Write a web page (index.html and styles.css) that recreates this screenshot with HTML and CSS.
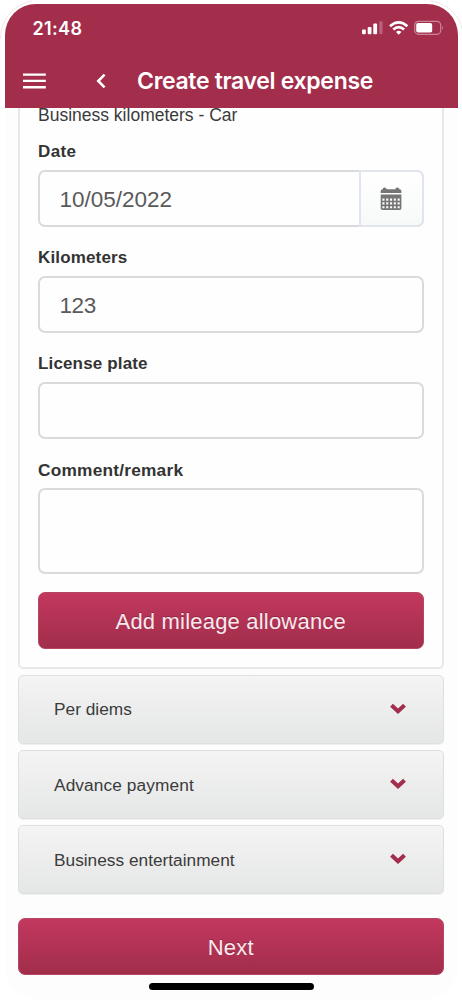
FILE: index.html
```html
<!DOCTYPE html>
<html lang="en">
<head>
<meta charset="utf-8">
<meta name="viewport" content="width=device-width, initial-scale=1">
<title>Create travel expense</title>
<link rel="stylesheet" href="styles.css">
</head>
<body>
<div class="phone">
  <header class="header">
    <div class="status">
      <span class="clock">21:48</span>
      <svg class="status-icons" width="84" height="18" viewBox="0 0 84 18" fill="#fff">
        <rect x="1" y="10.5" width="3.8" height="4.8" rx="1"/>
        <rect x="6.7" y="8" width="3.8" height="7.3" rx="1"/>
        <rect x="12.3" y="4.5" width="3.8" height="10.8" rx="1"/>
        <rect x="18.3" y="2.3" width="3.2" height="13" rx="1" opacity=".25"/>
        <g fill="none" stroke="#fff" stroke-width="2.7">
          <path d="M29 7.2Q37.7 -.6 46.4 7.2"/>
          <path d="M32.3 10.6Q37.7 5.8 43.1 10.6"/>
        </g>
        <path d="M35 13q2.7-2.4 5.4 0l-2.7 2.7z"/>
        <rect x="53.7" y="2.3" width="26" height="13" rx="3.8" fill="none" stroke="#fff" stroke-opacity=".42" stroke-width="1.2"/>
        <rect x="55.2" y="4" width="16" height="9.5" rx="1.8"/>
        <path d="M81 6.8q1.8 1.9 0 4z" opacity=".5"/>
      </svg>
    </div>
    <div class="navbar">
      <svg class="menu" width="23" height="16" viewBox="0 0 23 16" fill="#fff"><path d="M0 .4h22.8v2.4H0zM0 6.7h22.8v2.4H0zM0 13h22.8v2.4H0z"/></svg>
      <svg class="back" width="10" height="16" viewBox="0 0 10 16" fill="none" stroke="#fff" stroke-width="2.5"><path d="M8.6 1.6 2.2 8l6.4 6.4"/></svg>
      <h1 class="title">Create travel expense</h1>
    </div>
  </header>

  <main class="content">
    <section class="panel">
      <p class="kind">Business kilometers - Car</p>
      <label class="label label-date">Date</label>
      <div class="field date-field">
        <span class="value date-value">10/05/2022</span>
        <span class="picker">
          <svg width="22" height="23" viewBox="0 0 22 23">
            <path fill="#757575" d="M.7 6.1V3.8Q.7 2.2 2.7 2.2Q2.7.4 4.6.4T6.7 2.2h8.7Q15.4.4 17.3.4T19.4 2.2Q21.4 2.2 21.4 3.8v2.3zM.7 7.6h20.7v13.7q0 1.7-1.8 1.7H2.5Q.7 23 .7 21.2z"/>
            <path stroke="#fafafa" stroke-width="2.1" stroke-dasharray="2.1 1.7" d="M2.4 12.6h17.6M2.4 16.4h17.6M2.4 20.2h17.6"/>
          </svg>
        </span>
      </div>
      <label class="label label-km">Kilometers</label>
      <div class="field"><span class="value km-value">123</span></div>
      <label class="label label-plate">License plate</label>
      <div class="field"></div>
      <label class="label label-comment">Comment/remark</label>
      <div class="field area"></div>
      <button class="button add"><span>Add mileage allowance</span></button>
    </section>

    <section class="row">
      <span class="row-a">Per diems</span>
      <svg class="chevron" width="16" height="12" viewBox="0 0 16 12"><path d="M1.5 2.2 8 8.3l6.5-6.1" fill="none" stroke="#a32d4c" stroke-width="4"/></svg>
    </section>
    <section class="row">
      <span class="row-b">Advance payment</span>
      <svg class="chevron" width="16" height="12" viewBox="0 0 16 12"><path d="M1.5 2.2 8 8.3l6.5-6.1" fill="none" stroke="#a32d4c" stroke-width="4"/></svg>
    </section>
    <section class="row">
      <span class="row-c">Business entertainment</span>
      <svg class="chevron" width="16" height="12" viewBox="0 0 16 12"><path d="M1.5 2.2 8 8.3l6.5-6.1" fill="none" stroke="#a32d4c" stroke-width="4"/></svg>
    </section>
    <button class="button next"><span>Next</span></button>
    <div class="home"></div>
  </main>
</div>
</body>
</html>
```
FILE: styles.css
```css
* { box-sizing: border-box; }
body { margin: 0; background: #fff; font-family: "Liberation Sans", Arial, sans-serif; color: #3b3b3b; }
.phone { width: 462px; height: 1000px; overflow: hidden; padding: 4.3px 4.5px 0; background: #fff; }
.phone::before { content: ""; position: absolute; left: 0; top: 0; width: 462px; height: 38px; border-radius: 38px 38px 0 0; border: 1px solid #f5e6ea; border-width: 1px 1px 0; clip-path: polygon(0 0, 32px 0, 32px 100%, 430px 100%, 430px 0, 100% 0, 100% 100%, 0 100%); }
.header { height: 104px; background: #a32e4c; border-radius: 31px 31px 0 0; color: #fff; font-family: Inter, sans-serif; }
.status { display: flex; justify-content: space-between; align-items: center; height: 48px; padding: 0 13px 0 28px; }
.clock { font-size: 18px; font-weight: 600; letter-spacing: .35px; }
.navbar { display: flex; align-items: center; height: 57px; padding-left: 18.5px; }
.back { margin-left: 50px; }
.title { margin: 0 0 0 31px; font-size: 23px; line-height: 30px; font-weight: 600; letter-spacing: -.32px; white-space: nowrap; }
.content { height: 892px; padding: 0 14px 0 13.5px; background: #fdfdfd; border-radius: 0 0 34px 34px; }
.panel { display: flex; flex-direction: column; height: 560.5px; padding: 0 18px; border: 2px solid #e8e8e8; border-top: 0; border-radius: 0 0 5px 5px; background: #fefefe; }
.kind { height: 18px; margin: 0; font-size: 17.5px; line-height: 15px; white-space: nowrap; }
.label { height: 43.5px; padding-top: 15.5px; font-size: 17px; line-height: 20px; font-weight: 700; letter-spacing: .15px; color: #333; white-space: nowrap; }
.field + .label { height: 49px; padding-top: 21.5px; }
.label-date { letter-spacing: .4px; }
.label-comment { font-size: 17.3px; letter-spacing: .22px; }
.field { display: flex; align-items: center; flex: none; height: 57px; padding-left: 19.5px; border: 2px solid #dadada; border-radius: 7px; background: #fefefe; font-size: 22.5px; color: #5a5a5a; }
.value { flex: 1; padding-top: 3px; }
.km-value { letter-spacing: -.4px; }
.picker { display: flex; align-items: center; justify-content: center; width: 65px; height: 57px; margin: 0 -2px 0 0; border: 2px solid #e1e6ee; border-radius: 0 7px 7px 0; background: linear-gradient(#fff, #f7f9f9); }
.area { height: 86px; }
.button { display: flex; flex: none; align-items: center; justify-content: center; width: 100%; height: 57px; margin: 0; padding: 2px 0 0; border: 1px solid #b34761; border-radius: 7px; background: linear-gradient(#c3385e, #a12d4b); color: #f9eaee; font: 22px "Liberation Sans", Arial, sans-serif; letter-spacing: .2px; text-shadow: 0 -1px 0 #8f2843; }
.add { margin-top: 18.5px; }
.row { display: flex; align-items: center; justify-content: space-between; height: 69px; margin-top: 6.2px; padding: 0 36.5px 0 35px; border: 1.5px solid #dedfdf; border-radius: 5px; background: linear-gradient(#f4f4f4, #e5e6e6); font-size: 17.3px; box-shadow: 0 1px 1px #efefef; }
.row-a { padding-top: 1px; }
.row-b { padding-top: 1px; letter-spacing: .1px; }
.row-c { padding-top: 1px; }
.chevron { margin-bottom: 1px; }
.next { margin-top: 24px; }
.home { position: relative; left: .5px; width: 165px; height: 7px; margin: 8px auto 0; border-radius: 4px; background: #000; }
```
